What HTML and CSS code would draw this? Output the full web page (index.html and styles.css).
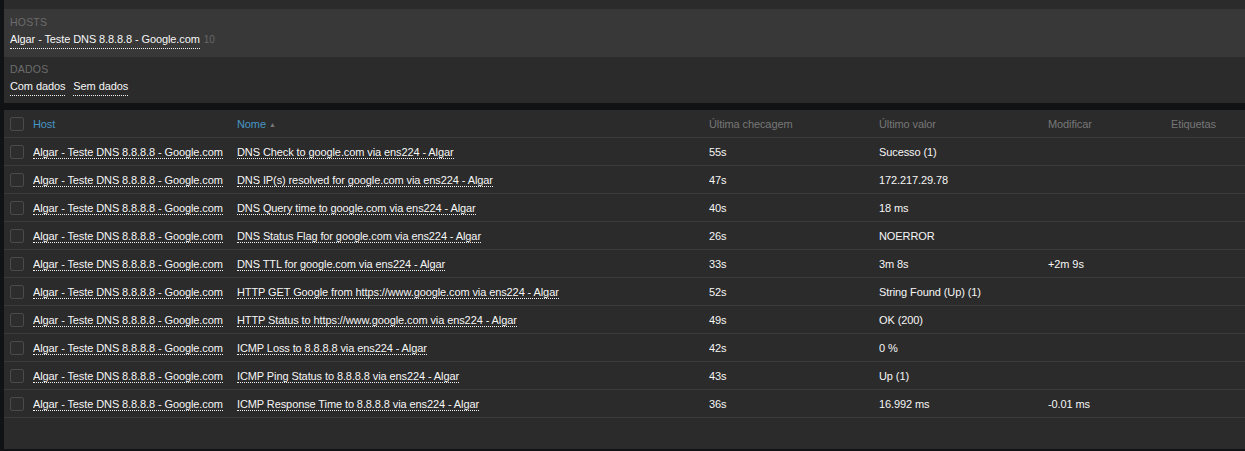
FILE: index.html
```html
<!DOCTYPE html>
<html lang="pt">
<head>
<meta charset="utf-8">
<link rel="stylesheet" href="styles.css">
</head>
<body>
<div class="page">
  <div class="topstrip"></div>
  <div class="filter">
    <div class="fsec hosts">
      <div class="flabel">HOSTS</div>
      <div class="flinks"><a class="lnk">Algar - Teste DNS 8.8.8.8 - Google.com</a><span class="cnt">10</span></div>
    </div>
    <div class="fsec dados">
      <div class="flabel">DADOS</div>
      <div class="flinks"><a class="lnk">Com dados</a><a class="lnk">Sem dados</a></div>
    </div>
  </div>
  <div class="gap"></div>
  <div class="panel">
    <table class="grid">
      <colgroup>
        <col class="c0"><col class="c1"><col class="c2"><col class="c3"><col class="c4"><col class="c5"><col class="c6">
      </colgroup>
      <thead>
        <tr>
          <th><span class="cb"></span></th>
          <th class="sortable">Host</th>
          <th class="sortable">Nome <span class="arrow">▲</span></th>
          <th>Última checagem</th>
          <th>Último valor</th>
          <th>Modificar</th>
          <th>Etiquetas</th>
        </tr>
      </thead>
      <tbody>
        <tr><td><span class="cb"></span></td><td><a class="lnk">Algar - Teste DNS 8.8.8.8 - Google.com</a></td><td><a class="lnk">DNS Check to google.com via ens224 - Algar</a></td><td>55s</td><td>Sucesso (1)</td><td></td><td></td></tr>
        <tr><td><span class="cb"></span></td><td><a class="lnk">Algar - Teste DNS 8.8.8.8 - Google.com</a></td><td><a class="lnk">DNS IP(s) resolved for google.com via ens224 - Algar</a></td><td>47s</td><td>172.217.29.78</td><td></td><td></td></tr>
        <tr><td><span class="cb"></span></td><td><a class="lnk">Algar - Teste DNS 8.8.8.8 - Google.com</a></td><td><a class="lnk">DNS Query time to google.com via ens224 - Algar</a></td><td>40s</td><td>18 ms</td><td></td><td></td></tr>
        <tr><td><span class="cb"></span></td><td><a class="lnk">Algar - Teste DNS 8.8.8.8 - Google.com</a></td><td><a class="lnk">DNS Status Flag for google.com via ens224 - Algar</a></td><td>26s</td><td>NOERROR</td><td></td><td></td></tr>
        <tr><td><span class="cb"></span></td><td><a class="lnk">Algar - Teste DNS 8.8.8.8 - Google.com</a></td><td><a class="lnk">DNS TTL for google.com via ens224 - Algar</a></td><td>33s</td><td>3m 8s</td><td>+2m 9s</td><td></td></tr>
        <tr><td><span class="cb"></span></td><td><a class="lnk">Algar - Teste DNS 8.8.8.8 - Google.com</a></td><td><a class="lnk">HTTP GET Google from https://www.google.com via ens224 - Algar</a></td><td>52s</td><td>String Found (Up) (1)</td><td></td><td></td></tr>
        <tr><td><span class="cb"></span></td><td><a class="lnk">Algar - Teste DNS 8.8.8.8 - Google.com</a></td><td><a class="lnk">HTTP Status to https://www.google.com via ens224 - Algar</a></td><td>49s</td><td>OK (200)</td><td></td><td></td></tr>
        <tr><td><span class="cb"></span></td><td><a class="lnk">Algar - Teste DNS 8.8.8.8 - Google.com</a></td><td><a class="lnk">ICMP Loss to 8.8.8.8 via ens224 - Algar</a></td><td>42s</td><td>0 %</td><td></td><td></td></tr>
        <tr><td><span class="cb"></span></td><td><a class="lnk">Algar - Teste DNS 8.8.8.8 - Google.com</a></td><td><a class="lnk">ICMP Ping Status to 8.8.8.8 via ens224 - Algar</a></td><td>43s</td><td>Up (1)</td><td></td><td></td></tr>
        <tr><td><span class="cb"></span></td><td><a class="lnk">Algar - Teste DNS 8.8.8.8 - Google.com</a></td><td><a class="lnk">ICMP Response Time to 8.8.8.8 via ens224 - Algar</a></td><td>36s</td><td>16.992 ms</td><td>-0.01 ms</td><td></td></tr>
      </tbody>
    </table>
  </div>
</div>
</body>
</html>
```

FILE: styles.css
```css
html, body {
  margin: 0;
  padding: 0;
  background: #111213;
  font-family: "Liberation Sans", Arial, sans-serif;
  font-size: 11px;
  letter-spacing: -0.1px;
  color: #f6f6f6;
}
.page {
  padding-left: 4px;
  width: 1241px;
}
.topstrip {
  height: 9px;
  background: #2b2b2b;
}
.filter {
  display: flex;
  flex-direction: column;
}
.fsec {
  padding: 6px 6px 8px;
}
.hosts {
  background: #383838;
}
.dados {
  background: #2b2b2b;
  padding: 5px 6px 7px;
}
.flabel {
  font-size: 10.5px;
  letter-spacing: 0.2px;
  line-height: 15px;
  color: #6b6b6b;
}
.flinks {
  display: flex;
  align-items: baseline;
  gap: 8px;
  line-height: 18px;
}
.lnk {
  color: #f6f6f6;
  text-decoration: none;
  border-bottom: 1px dotted #f2f2f2;
  cursor: pointer;
}
.cnt {
  margin-left: -4px;
  font-size: 10px;
  color: #666;
}
.gap {
  height: 7px;
}
.panel {
  background: #2b2b2b;
  padding-bottom: 31px;
  margin-bottom: 3px;
}
.grid {
  width: 1241px;
  table-layout: fixed;
  border-collapse: collapse;
}
.c0 { width: 29px; }
.c1 { width: 204px; }
.c2 { width: 472px; }
.c3 { width: 170px; }
.c4 { width: 169px; }
.c5 { width: 123px; }
.c6 { width: 74px; }
.grid th, .grid td {
  padding: 0;
  text-align: left;
  vertical-align: middle;
  border-bottom: 1px solid #3b3b3b;
  white-space: nowrap;
  overflow: hidden;
}
.grid th {
  height: 27px;
  font-weight: normal;
  color: #777;
}
.grid th.sortable {
  color: #4796c4;
}
.arrow {
  font-size: 7px;
  color: #777;
  vertical-align: 1px;
}
.grid td {
  height: 27px;
  color: #f6f6f6;
}
.cb {
  display: block;
  width: 12px;
  height: 12px;
  margin-left: 6px;
  border: 1px solid #4a4a4a;
  border-radius: 2px;
  background: #2d2d2d;
}
```
